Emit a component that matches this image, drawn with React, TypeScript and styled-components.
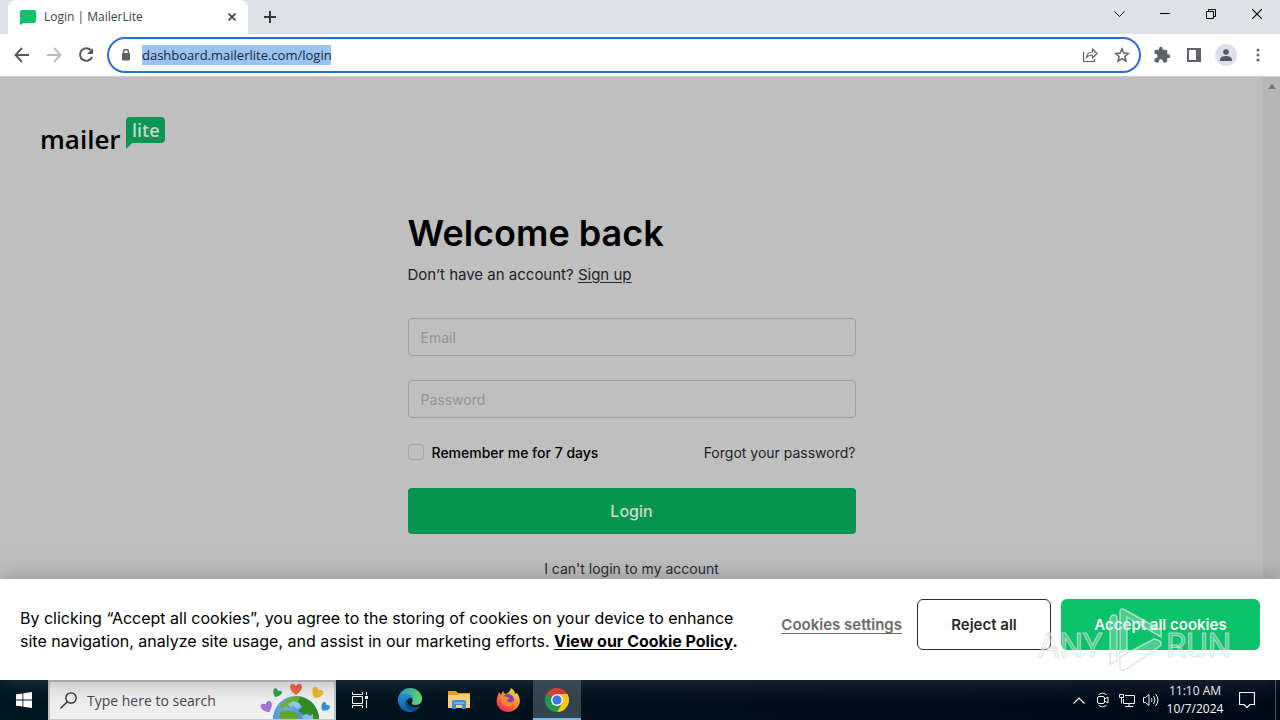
import React from "react";
import styled, { createGlobalStyle, css } from "styled-components";

const uiFont = `"Open Sans", "Noto Sans", sans-serif`;
const pageFont = `Inter, "Liberation Sans", sans-serif`;

const GlobalStyle = createGlobalStyle`
  *, *::before, *::after { box-sizing: border-box; }
  body { margin: 0; background: #bfbfbf; }
  button, input { font: inherit; margin: 0; }
  button { border: 0; background: none; padding: 0; color: inherit; cursor: pointer; }
  svg { display: block; flex: none; }
`;

const Screen = styled.div`
  display: flex;
  flex-direction: column;
  height: 100vh;
  overflow: hidden;
`;

/* Browser chrome */
const TabStrip = styled.header`
  display: flex;
  align-items: stretch;
  height: 34px;
  padding-left: 8px;
  background: #dee1e6;
  font-family: ${uiFont};
`;

const Tab = styled.div`
  display: flex;
  align-items: center;
  gap: 8px;
  width: 240px;
  padding: 0 8px 0 12px;
  border-radius: 8px 8px 0 0;
  background: #fff;
  font-size: 12px;
  line-height: 16px;
  color: #3c4043;
`;

const TabTitle = styled.span`
  flex: 1;
  white-space: nowrap;
`;

const IconButton = styled.button<{ $w?: number; $h?: number; $tone?: string }>`
  display: flex;
  align-items: center;
  justify-content: center;
  flex: none;
  width: ${(p) => p.$w ?? 32}px;
  height: ${(p) => p.$h ?? 32}px;
  color: ${(p) => p.$tone ?? "inherit"};
`;

const WindowControls = styled.div`
  display: flex;
  margin-left: auto;
`;

const Toolbar = styled.nav`
  display: flex;
  align-items: center;
  height: 43px;
  padding: 0 6px;
  background: #fff;
  border-bottom: 1px solid #d0d1d3;
`;

const AddressBar = styled.div`
  display: flex;
  align-items: center;
  flex: 1;
  height: 36px;
  margin: 0 5px;
  padding: 0 1px 0 11px;
  border: 2px solid #2a6fd0;
  border-radius: 18px;
  font-family: ${uiFont};
`;

const AddressInput = styled.input`
  flex: 1;
  min-width: 0;
  border: 0;
  outline: 0;
  padding: 0;
  background: linear-gradient(#9dc3f0, #9dc3f0) 0 0 / 189px 20px no-repeat;
  height: 20px;
  font-size: 13px;
  color: #16273c;
`;

const LockSlot = styled.span`
  width: 22px;
`;

const Avatar = styled.span`
  display: flex;
  align-items: center;
  justify-content: center;
  width: 22px;
  height: 22px;
  border-radius: 50%;
  background: #dde0e9;
`;

/* Web page */
const Viewport = styled.div`
  position: relative;
  display: flex;
  flex: 1;
  min-height: 0;
  background: #bfbfbf;
  font-family: ${pageFont};
`;

const Page = styled.main`
  flex: 1;
  padding: 40px;
`;

const ScrollTrack = styled.div`
  display: flex;
  justify-content: center;
  width: 17px;
  padding-top: 7px;
  background: #b6b6b6;
`;

const Logo = styled.div`
  display: flex;
  height: 36px;
`;

const LoginForm = styled.form`
  display: flex;
  flex-direction: column;
  width: 448px;
  max-width: 100%;
  margin: 56px auto 0;
  font-size: 14px;
  color: #222428;
`;

const Title = styled.h1`
  margin: 0;
  font-size: 36px;
  line-height: 48px;
  font-weight: 600;
  color: #000;
`;

const Lead = styled.p`
  margin: 7px 0 32px;
  font-size: 15px;
  line-height: 22px;
`;

const TextLink = styled.a`
  color: inherit;
  text-underline-offset: 2px;
`;

const PlainLink = styled.a`
  color: inherit;
  text-decoration: none;
`;

const Field = styled.input`
  width: 100%;
  height: 38px;
  margin-bottom: 24px;
  padding: 0 12px;
  border: 1px solid #9c9c9c;
  border-radius: 4px;
  background: transparent;
  font-size: 14px;
  &::placeholder { color: #929292; opacity: 1; }
`;

const OptionsRow = styled.div`
  display: flex;
  align-items: center;
  justify-content: space-between;
  height: 20px;
  margin-bottom: 26px;
`;

const Remember = styled.label`
  display: flex;
  align-items: center;
  gap: 8px;
  font-weight: 500;
  color: #000;
`;

const Checkbox = styled.input`
  appearance: none;
  width: 16px;
  height: 16px;
  border: 1px solid #a2a2a2;
  border-radius: 4px;
`;

const LoginButton = styled.button`
  height: 46px;
  margin-bottom: 24px;
  border-radius: 4px;
  background: #07944f;
  color: #c9dccf;
  font-size: 16px;
  font-weight: 500;
`;

const HelpLink = styled(PlainLink)`
  align-self: center;
  line-height: 22px;
`;

const CookieBar = styled.section`
  position: absolute;
  left: 0;
  right: 0;
  bottom: 0;
  display: flex;
  align-items: center;
  min-height: 101px;
  padding: 0 20px;
  background: #fff;
  box-shadow: 0 0 24px rgba(80, 90, 100, 0.5);
`;

const CookieText = styled.p`
  flex: 1;
  margin: 0 20px 0 0;
  max-width: 730px;
  font-size: 16px;
  line-height: 23px;
  color: #000;
`;

const CookieActions = styled.div`
  display: flex;
  align-items: center;
  gap: 10px;
  margin-left: auto;
  margin-top: -10px;
  font-size: 15px;
  font-weight: 600;
`;

const SettingsButton = styled.button`
  margin-right: 5px;
  color: #696969;
  text-decoration: underline;
  text-underline-offset: 3px;
`;

const CookieButton = styled.button<{ $primary?: boolean }>`
  height: 51px;
  border-radius: 6px;
  ${(p) =>
    p.$primary
      ? css`
          width: 199px;
          background: #09c269;
          color: #fff;
        `
      : css`
          width: 134px;
          border: 1px solid #2b2b2f;
          color: #27272b;
        `}
`;

const Watermark = styled.div`
  position: absolute;
  right: 44px;
  bottom: 6px;
  pointer-events: none;
`;

/* Windows taskbar */
const Taskbar = styled.footer`
  display: flex;
  align-items: stretch;
  height: 40px;
  background: linear-gradient(90deg, #001820, #00101c 55%, #000a1a);
  color: #fff;
  font-family: ${uiFont};
`;

const SearchBox = styled.label`
  display: flex;
  align-items: center;
  width: 288px;
  padding: 0 2px 0 10px;
  border: 2px solid #c4c5c5;
  border-bottom-width: 1px;
  background: #f0f0f0;
`;

const SearchInput = styled.input`
  flex: 1;
  min-width: 0;
  margin-left: 10px;
  padding: 0;
  border: 0;
  outline: 0;
  background: transparent;
  font-size: 14px;
  &::placeholder { color: #454545; opacity: 1; }
`;

const PinnedApps = styled.div`
  display: flex;
  gap: 1px;
  margin-left: 2px;
`;

const TaskButton = styled.button<{ $active?: boolean }>`
  display: flex;
  align-items: center;
  justify-content: center;
  width: 48px;
  ${(p) =>
    p.$active &&
    css`
      background: #33454e;
      border-bottom: 2px solid #76b9ed;
      padding-top: 2px;
    `}
`;

const Tray = styled.div`
  display: flex;
  align-items: center;
  margin-left: auto;
  margin-right: 4px;
  padding-right: 8px;
  border-right: 1px solid #4d5661;
`;

const Clock = styled.time`
  width: 64px;
  font-size: 12px;
  line-height: 18px;
  text-align: center;
  white-space: nowrap;
`;

const s = { fill: "none", stroke: "currentColor" };

const Globe = () => (
  <svg width="72" height="37" viewBox="0 0 72 37">
    <defs>
      <radialGradient id="sea" cx=".3" cy=".3" r=".8">
        <stop offset="0" stopColor="#78aef0" />
        <stop offset="1" stopColor="#2868c8" />
      </radialGradient>
      <clipPath id="disc"><circle cx="36" cy="37" r="23" /></clipPath>
      <path id="heart" d="M0 6C-3 4-6 1-6-2C-6-6-2-6 0-3C2-6 6-6 6-2C6 1 3 4 0 6Z" />
    </defs>
    <circle cx="36" cy="37" r="23" fill="url(#sea)" />
    <g clipPath="url(#disc)">
      <path d="M20 24Q30 11 48 15L46 21 41 20 38 24 33 22 30 26 25 24 22 28Z" fill="#6bb02f" />
      <path d="M40 15Q56 18 60 37H52L49 31 44 33 38 29 43 25 38 20Z" fill="#348c21" />
      <path d="M20 30L27 28 35 30 39 33 37 38H20Z" fill="#61a62e" />
      <path d="M28 22l5-3 6 2 2 4-4 2-3-3-4 1z" fill="#8bcdf5" />
      <path d="M42 34l4-2 4 2 3-2v6H42z" fill="#7fc0f0" />
    </g>
    <use href="#heart" transform="translate(36 7)" fill="#f26045" />
    <use href="#heart" transform="translate(17 11) rotate(25) scale(.75)" fill="#25a456" />
    <use href="#heart" transform="translate(57 11) rotate(30) scale(.95)" fill="#f9b424" />
    <use href="#heart" transform="translate(7 25) rotate(-25) scale(.95)" fill="#a173d2" />
    <use href="#heart" transform="translate(65 25) rotate(40) scale(.75)" fill="#318fdb" />
  </svg>
);

const EdgeIcon = () => (
  <svg width="24" height="24" viewBox="0 0 24 24">
    <defs>
      <linearGradient id="edgeTop" x1="0" x2="1">
        <stop stopColor="#239edb" />
        <stop offset="1" stopColor="#68da61" />
      </linearGradient>
      <linearGradient id="edgeSide" x2="0" y2="1">
        <stop stopColor="#2296dc" />
        <stop offset="1" stopColor="#125aaa" />
      </linearGradient>
    </defs>
    <path d="M0 12C1 3 7 0 12 0 20 0 24 6 24 11c0 4-3 6-7 6-3 0-4-1-3-3 2-3-1-6-4-6-5 0-9 2-10 4Z" fill="url(#edgeTop)" />
    <path d="M0 12C1 7 5 5 9 6c5 0 6 4 6 6-1-3-6-3-6 2 0 5 6 8 12 5-2 3-5 5-9 5C5 24 0 19 0 12Z" fill="url(#edgeSide)" />
    <path d="M9 11c-4 5 0 12 7 12 3-1 5-3 6-5-6 3-14 0-13-7Z" fill="#134a88" />
  </svg>
);

const FolderIcon = () => (
  <svg width="22" height="20" viewBox="0 0 22 20">
    <path d="M0 1h8l2 2h12v4H0z" fill="#e6a52d" />
    <path d="M0 5h9l2-1h11v14H0z" fill="#fcd66f" />
    <path d="M4 19v-7q0-2 2-2h10q2 0 2 2v7h-4v-4H8v4z" fill="#3d91ca" />
    <path d="M6 12h10v2H6z" fill="#69b9e8" />
  </svg>
);

const FirefoxIcon = () => (
  <svg width="24" height="24" viewBox="0 0 24 24">
    <defs>
      <linearGradient id="fox" x1=".8" y1="0" x2=".2" y2="1">
        <stop stopColor="#fff04a" />
        <stop offset=".45" stopColor="#ff9027" />
        <stop offset=".8" stopColor="#ff3d52" />
        <stop offset="1" stopColor="#e52178" />
      </linearGradient>
    </defs>
    <path d="M15 0c3 2 4 4 4 6l2-1c7 10 0 19-9 19C3 24-2 15 2 7l1-3 2 3 2-4 2 3c3 0 5-3 6-6Z" fill="url(#fox)" />
    <circle cx="12" cy="12" r="6" fill="#7742c8" />
    <path d="M5 9c4-2 6 0 9 1l-3 2c1 3 4 3 7 1-1 5-5 6-8 5-4-1-6-5-5-9Z" fill="#ff8e24" />
  </svg>
);

const ChromeIcon = () => (
  <svg width="24" height="24" viewBox="0 0 24 24">
    <path d="M12 12L1.6 6A12 12 0 0 1 22.4 6Z" fill="#e33b2e" />
    <path d="M12 12L1.6 6A12 12 0 0 0 12 24L17.2 15Z" fill="#229b4d" />
    <path d="M12 6H22.4A12 12 0 0 1 12 24L17.2 15Z" fill="#fccb16" />
    <circle cx="12" cy="12" r="6" fill="#fff" />
    <circle cx="12" cy="12" r="4.6" fill="#3979e8" />
  </svg>
);

export default function App() {
  return (
    <Screen>
      <GlobalStyle />
      <TabStrip>
        <Tab>
          <svg width="16" height="16" viewBox="0 0 16 16">
            <path d="M2 1h12q2 0 2 2v9q0 2-2 2H4l-4 2V3q0-2 2-2Z" fill="#09c269" />
          </svg>
          <TabTitle>Login | MailerLite</TabTitle>
          <IconButton $w={16} $h={16} aria-label="Close tab">
            <svg width="8" height="8" viewBox="0 0 8 8" {...s} strokeWidth="1.6"><path d="M.5.5l7 7m0-7l-7 7" /></svg>
          </IconButton>
        </Tab>
        <IconButton $w={44} $h={34} $tone="#35373b" aria-label="New tab">
          <svg width="12" height="12" viewBox="0 0 12 12" {...s} strokeWidth="2"><path d="M6 0v12M0 6h12" /></svg>
        </IconButton>
        <WindowControls>
          <IconButton $w={46} $h={28} aria-label="Search tabs">
            <svg width="11" height="7" viewBox="0 0 11 7" {...s}><path d="M.5.5l5 5 5-5" /></svg>
          </IconButton>
          <IconButton $w={46} $h={28} aria-label="Minimize">
            <svg width="10" height="2" viewBox="0 0 10 2"><path d="M0 0h10v1H0z" /></svg>
          </IconButton>
          <IconButton $w={46} $h={28} aria-label="Restore">
            <svg width="10" height="10" viewBox="0 0 10 10" {...s}><path d="M.5 2.500h7v7h-7zM2.500 2.500v-2h7v7h-2" /></svg>
          </IconButton>
          <IconButton $w={46} $h={28} aria-label="Close">
            <svg width="10" height="10" viewBox="0 0 10 10" {...s} strokeWidth="1.100"><path d="M0 0l10 10M10 0L0 10" /></svg>
          </IconButton>
        </WindowControls>
      </TabStrip>

      <Toolbar>
        <IconButton aria-label="Back" $tone="#55585c">
          <svg width="16" height="16" viewBox="0 0 16 16" {...s} strokeWidth="1.900"><path d="M15 8H2M8 1L1.500 8 8 15" /></svg>
        </IconButton>
        <IconButton aria-label="Forward" $tone="#bbbcbe">
          <svg width="16" height="16" viewBox="0 0 16 16" {...s} strokeWidth="1.900"><path d="M1 8h13M8 1l6.500 7L8 15" /></svg>
        </IconButton>
        <IconButton aria-label="Reload" $tone="#55585c">
          <svg width="16" height="16" viewBox="0 0 16 16">
            <path d="M13 3.300A6.300 6.300 0 1 0 14.100 10" {...s} strokeWidth="2" />
            <path d="M15 1v6H9z" fill="currentColor" />
          </svg>
        </IconButton>
        <AddressBar>
          <LockSlot>
            <svg width="12" height="14" viewBox="0 0 12 14">
              <path d="M3.500 6V4a2.500 2.500 0 0 1 5 0v2" fill="none" stroke="#5f6368" strokeWidth="1.500" />
              <rect x="2" y="5" width="8" height="7.500" rx="1" fill="#5f6368" />
            </svg>
          </LockSlot>
          <AddressInput aria-label="Address" defaultValue="dashboard.mailerlite.com/login" />
          <IconButton aria-label="Share" $tone="#5f6368">
            <svg width="16" height="16" viewBox="0 0 16 16" {...s} strokeWidth="1.200">
              <path d="M1.500 5v9.500h11V12M4.500 10.500c.5-4 3-5.500 6-5.500V2L15 6.500 10.500 11V8c-3 0-4.500.5-6 2.500Z" />
            </svg>
          </IconButton>
          <IconButton aria-label="Bookmark" $tone="#5f6368">
            <svg width="16" height="16" viewBox="0 0 16 16" {...s} strokeWidth="1.500">
              <path d="M8 1.800l1.800 4.300 4.600.4-3.500 3 1.100 4.600L8 11.600l-4 2.500 1.100-4.600-3.500-3 4.600-.4z" />
            </svg>
          </IconButton>
        </AddressBar>
        <IconButton aria-label="Extensions">
          <svg width="18" height="18" viewBox="0 0 24 24" fill="#5f6368">
            <path d="M20.500 11H19V7a2 2 0 0 0-2-2h-4V3.500a2.500 2.500 0 0 0-5 0V5H4a2 2 0 0 0-2 2v3.800h1.500a2.700 2.700 0 0 1 0 5.400H2V20a2 2 0 0 0 2 2h3.800v-1.500a2.700 2.700 0 0 1 5.400 0V22H17a2 2 0 0 0 2-2v-4h1.500a2.500 2.500 0 0 0 0-5z" />
          </svg>
        </IconButton>
        <IconButton aria-label="Side panel">
          <svg width="14" height="14" viewBox="0 0 14 14"><path d="M0 0h14v14H0zM2 2v10h7V2z" fill="#5f6368" fillRule="evenodd" /></svg>
        </IconButton>
        <IconButton aria-label="Profile">
          <Avatar>
            <svg width="12" height="12" viewBox="0 0 12 12" fill="#50576a"><circle cx="6" cy="3" r="2.800" /><path d="M0 12v-2Q1 7 6 7t6 3v2z" /></svg>
          </Avatar>
        </IconButton>
        <IconButton aria-label="Menu">
          <svg width="4" height="14" viewBox="0 0 4 14" fill="#5f6368"><circle cx="2" cy="2" r="1.500" /><circle cx="2" cy="7" r="1.500" /><circle cx="2" cy="12" r="1.500" /></svg>
        </IconButton>
      </Toolbar>

      <Viewport>
        <Page>
          <Logo>
            <svg width="126" height="36" viewBox="0 0 126 36" role="img" aria-label="MailerLite">
              <path d="M90 0h31q4 0 4 4v18q0 4-4 4H92l-6 6V4q0-4 4-4Z" fill="#0c9452" />
              <text x="0" y="32" fontFamily="'Open Sans', sans-serif" fontSize="26" fontWeight="600">mailer</text>
              <text x="92" y="20" fontFamily="'Open Sans', sans-serif" fontSize="18" fontWeight="600" fill="#c0d8c8">lite</text>
            </svg>
          </Logo>
          <LoginForm onSubmit={(e) => e.preventDefault()}>
            <Title>Welcome back</Title>
            <Lead>Don’t have an account? <TextLink href="#signup">Sign up</TextLink></Lead>
            <Field type="email" aria-label="Email" placeholder="Email" />
            <Field type="password" aria-label="Password" placeholder="Password" />
            <OptionsRow>
              <Remember><Checkbox type="checkbox" />Remember me for 7 days</Remember>
              <PlainLink href="#forgot">Forgot your password?</PlainLink>
            </OptionsRow>
            <LoginButton type="submit">Login</LoginButton>
            <HelpLink href="#help">I can't login to my account</HelpLink>
          </LoginForm>
        </Page>
        <ScrollTrack>
          <svg width="8" height="5" viewBox="0 0 8 5"><path d="M0 5l4-5 4 5z" fill="#747474" /></svg>
        </ScrollTrack>
        <CookieBar aria-label="Cookie consent">
          <CookieText>
            By clicking “Accept all cookies”, you agree to the storing of cookies on your device to enhance site
            navigation, analyze site usage, and assist in our marketing efforts.{" "}
            <b><TextLink href="#policy">View our Cookie Policy</TextLink>.</b>
          </CookieText>
          <CookieActions>
            <SettingsButton>Cookies settings</SettingsButton>
            <CookieButton>Reject all</CookieButton>
            <CookieButton $primary>Accept all cookies</CookieButton>
          </CookieActions>
          <Watermark>
            <svg width="200" height="66" viewBox="0 0 200 66" fill="#fff" fillOpacity=".25" stroke="#d7dcda" strokeOpacity=".8">
              <text x="2" y="49" fontFamily="Roboto, sans-serif" fontSize="33">ANY</text>
              <text x="130" y="49" fontFamily="Roboto, sans-serif" fontSize="33">RUN</text>
              <path d="M74 12q0-5 4-5 3 0 3 4v42l-7 3zM84 4q0-5 5-2l36 20v7L91 9v32l-7 4zM84 49l34-18q10 2 6 7L91 61q-7 3-7-1z" strokeWidth="1.500" />
            </svg>
          </Watermark>
        </CookieBar>
      </Viewport>

      <Taskbar>
        <IconButton $w={48} $h={40} aria-label="Start">
          <svg width="16" height="16" viewBox="0 0 16 16" fill="#fff"><path d="M0 2.300L6.500 1.400V7.600H0zM7.300 1.300L16 0V7.600H7.300zM0 8.400H6.500V14.600L0 13.700zM7.300 8.400H16V16L7.300 14.700z" /></svg>
        </IconButton>
        <SearchBox>
          <svg width="17" height="17" viewBox="0 0 17 17" {...s} color="#222" strokeWidth="1.300"><circle cx="11" cy="6" r="5.200" /><path d="M7 10L.5 16.500" /></svg>
          <SearchInput aria-label="Search" placeholder="Type here to search" />
          <Globe />
        </SearchBox>
        <TaskButton aria-label="Task view">
          <svg width="17" height="16" viewBox="0 0 17 16" {...s}>
            <path d="M.5 0v2.500h10V0M.5 16v-2.500h10V16M.5 4.500h10v7H.5zM14.500 0v3M14.500 8v8" />
            <path d="M13 4h3v3h-3z" fill="#fff" stroke="none" />
          </svg>
        </TaskButton>
        <PinnedApps>
          <TaskButton aria-label="Microsoft Edge"><EdgeIcon /></TaskButton>
          <TaskButton aria-label="File Explorer"><FolderIcon /></TaskButton>
          <TaskButton aria-label="Firefox"><FirefoxIcon /></TaskButton>
          <TaskButton $active aria-label="Google Chrome"><ChromeIcon /></TaskButton>
        </PinnedApps>
        <Tray>
          <IconButton $w={24} aria-label="Show hidden icons">
            <svg width="12" height="7" viewBox="0 0 12 7" {...s} strokeWidth="1.200"><path d="M.5 6.500L6 1l5.500 5.500" /></svg>
          </IconButton>
          <IconButton $w={24} aria-label="Meet now">
            <svg width="12" height="16" viewBox="0 0 12 16" {...s}>
              <rect x=".5" y="4.500" width="7" height="7" rx="1.500" />
              <path d="M7.500 7L11 5v6L7.500 9M1.500 2.500Q5.500-.5 9.500 2.500M1.500 13.500q4 3 8 0" />
            </svg>
          </IconButton>
          <IconButton $w={24} aria-label="Network">
            <svg width="16" height="15" viewBox="0 0 16 15" {...s}><path d="M6 2.500h9.500v8H4.500V6M10 10.500v3M6 13.500h8M.5 1.500h4v3h-4zM2.500 5v5.500" /></svg>
          </IconButton>
          <IconButton $w={24} aria-label="Volume">
            <svg width="16" height="14" viewBox="0 0 16 14" {...s}><path d="M.5 4.500h2l3.500-3v11l-3.500-3h-2zM8.500 5q1 2 0 4M10.500 3q3 4 0 8M12.500 1q5 6 0 12" /></svg>
          </IconButton>
          <Clock>11:10 AM<br />10/7/2024</Clock>
          <IconButton $w={40} aria-label="Notifications">
            <svg width="16" height="16" viewBox="0 0 16 16" {...s} strokeWidth="1.200"><path d="M.5.5h15v12H11L8 15.500 5 12.500H.5z" /></svg>
          </IconButton>
        </Tray>
      </Taskbar>
    </Screen>
  );
}
